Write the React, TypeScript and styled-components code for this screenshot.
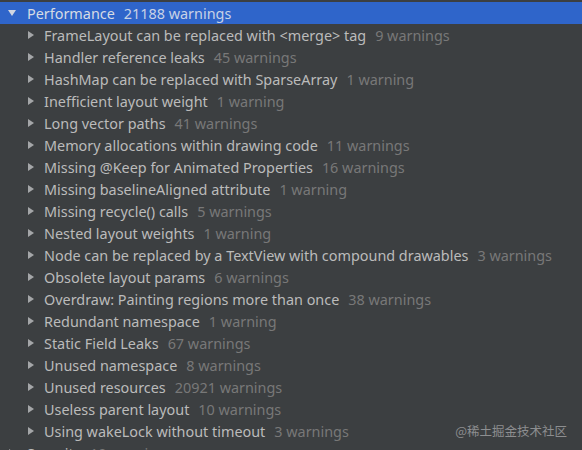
import styled, { createGlobalStyle } from "styled-components";

const GlobalStyle = createGlobalStyle`
  html, body {
    margin: 0;
    padding: 0;
    background: #3c3f41;
    overflow: hidden;
  }
`

const Tree = styled.div`
  position: relative;
  width: 582px;
  height: 450px;
  overflow: hidden;
  padding-top: 2px;
  box-sizing: border-box;
  background: #3c3f41;
  font-family: "Noto Sans", "Open Sans", sans-serif;
  font-size: 14.4px;
`
const Row = styled.div<{ $selected?: boolean; $depth: number }>`
  display: flex;
  align-items: center;
  height: 22px;
  padding-left: ${p => (p.$depth === 0 ? 8 : 27)}px;
  background: ${p => (p.$selected ? "#2f65ca" : "transparent")};
  white-space: nowrap;
`
const Arrow = styled.svg<{ $gap: number }>`
  width: 8px;
  height: 8px;
  flex: none;
  margin-right: ${p => p.$gap}px;
`
const Name = styled.span<{ $selected?: boolean }>`
  color: ${p => (p.$selected ? "#d6dbe4" : "#bbbbbb")};
`
const Count = styled.span<{ $selected?: boolean }>`
  margin-left: 9px;
  color: ${p => (p.$selected ? "#c8d2e6" : "#787878")};
`
const Watermark = styled.div`
  position: absolute;
  right: 15px;
  top: 421px;
  font-family: "Noto Sans CJK SC", sans-serif;
  font-size: 12.5px;
  color: #8d8e90;
`

const items: [string, string][] = [
  ["FrameLayout can be replaced with <merge> tag", "9 warnings"],
  ["Handler reference leaks", "45 warnings"],
  ["HashMap can be replaced with SparseArray", "1 warning"],
  ["Inefficient layout weight", "1 warning"],
  ["Long vector paths", "41 warnings"],
  ["Memory allocations within drawing code", "11 warnings"],
  ["Missing @Keep for Animated Properties", "16 warnings"],
  ["Missing baselineAligned attribute", "1 warning"],
  ["Missing recycle() calls", "5 warnings"],
  ["Nested layout weights", "1 warning"],
  ["Node can be replaced by a TextView with compound drawables", "3 warnings"],
  ["Obsolete layout params", "6 warnings"],
  ["Overdraw: Painting regions more than once", "38 warnings"],
  ["Redundant namespace", "1 warning"],
  ["Static Field Leaks", "67 warnings"],
  ["Unused namespace", "8 warnings"],
  ["Unused resources", "20921 warnings"],
  ["Useless parent layout", "10 warnings"],
  ["Using wakeLock without timeout", "3 warnings"],
]

const RightArrow = ({ gap }: { gap: number }) => (
  <Arrow $gap={gap} viewBox="0 0 8 8">
    <path d="M1 0 L7 4 L1 8 Z" fill="#a4a6a8" />
  </Arrow>
)
const DownArrow = ({ color, gap }: { color: string; gap: number }) => (
  <Arrow $gap={gap} viewBox="0 0 8 8">
    <path d="M0 1 L8 1 L4 7 Z" fill={color} />
  </Arrow>
)

export default function App() {
  return (
    <>
      <GlobalStyle />
      <Tree>
        <Row $selected $depth={0}>
          <DownArrow color="#d0d6e2" gap={11} />
          <Name $selected>Performance</Name>
          <Count $selected>21188 warnings</Count>
        </Row>
        {items.map(([name, count]) => (
          <Row key={name} $depth={1}>
            <RightArrow gap={9} />
            <Name>{name}</Name>
            <Count>{count}</Count>
          </Row>
        ))}
        <Row $depth={0}>
          <RightArrow gap={11} />
          <Name>Security</Name>
          <Count>10 warnings</Count>
        </Row>
        <Watermark>@稀土掘金技术社区</Watermark>
      </Tree>
    </>
  )
}
